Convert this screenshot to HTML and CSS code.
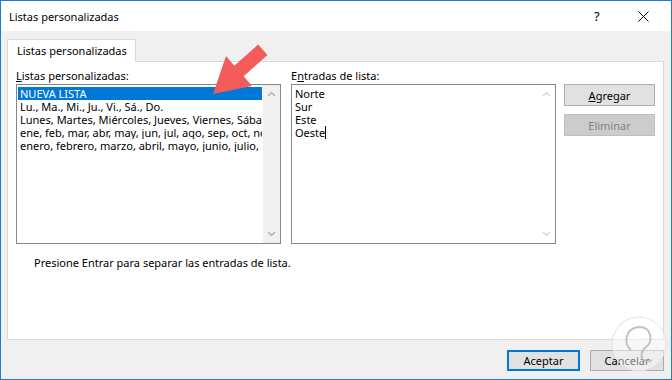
FILE: index.html
```html
<!DOCTYPE html>
<html lang="es">
<head>
    <meta charset="UTF-8">
    <title>Listas personalizadas</title>
    <link rel="stylesheet" href="styles.css">
</head>
<body>

    <div class="dialog">
        <!-- Barra de titulo -->
        <div class="titlebar">
            <span class="title">Listas personalizadas</span>
            <span class="help">?</span>
            <span class="close">
                <svg width="11" height="11" viewBox="0 0 11 11"><path d="M0.5 0.5 L10.5 10.5 M10.5 0.5 L0.5 10.5" stroke="#000" stroke-width="1" fill="none"/></svg>
            </span>
        </div>

        <div class="content">
            <div class="tabs">
                <div class="tab">Listas personalizadas</div>
            </div>

            <div class="panel">
                <div class="columns">
                    <div class="col">
                        <label class="field-label"><u>L</u>istas personalizadas:</label>
                        <div class="listbox">
                            <div class="items">
                                <div class="item selected">NUEVA LISTA</div>
                                <div class="item">Lu., Ma., Mi., Ju., Vi., Sá., Do.</div>
                                <div class="item">Lunes, Martes, Miércoles, Jueves, Viernes, Sábado, Domingo</div>
                                <div class="item">ene, feb, mar, abr, may, jun, jul, ago, sep, oct, nov, dic</div>
                                <div class="item">enero, febrero, marzo, abril, mayo, junio, julio, agosto</div>
                            </div>
                            <div class="scrollbar">
                                <svg width="9" height="6" viewBox="0 0 9 6"><path d="M1 5 L4.5 1.5 L8 5" stroke="#a6a6a6" stroke-width="1.2" fill="none"/></svg>
                                <svg width="9" height="6" viewBox="0 0 9 6"><path d="M1 1 L4.5 4.5 L8 1" stroke="#a6a6a6" stroke-width="1.2" fill="none"/></svg>
                            </div>
                        </div>
                    </div>

                    <div class="col">
                        <label class="field-label">E<u>n</u>tradas de lista:</label>
                        <div class="listbox">
                            <div class="items entries">
                                <div class="item">Norte</div>
                                <div class="item">Sur</div>
                                <div class="item">Este</div>
                                <div class="item">Oeste<span class="caret"></span></div>
                            </div>
                            <div class="scrollbar light">
                                <svg width="9" height="6" viewBox="0 0 9 6"><path d="M1 5 L4.5 1.5 L8 5" stroke="#cfcfcf" stroke-width="1.2" fill="none"/></svg>
                                <svg width="9" height="6" viewBox="0 0 9 6"><path d="M1 1 L4.5 4.5 L8 1" stroke="#cfcfcf" stroke-width="1.2" fill="none"/></svg>
                            </div>
                        </div>
                    </div>

                    <div class="side-buttons">
                        <button class="btn"><u>A</u>gregar</button>
                        <button class="btn disabled">Eliminar</button>
                    </div>
                </div>

                <p class="hint">Presione Entrar para separar las entradas de lista.</p>
            </div>

            <div class="footer">
                <button class="btn default">Aceptar</button>
                <button class="btn">Cancelar</button>
            </div>
        </div>

        <!-- Flecha roja que señala la lista -->
        <svg class="arrow" width="80" height="70" viewBox="200 36 80 70">
            <polygon points="213,94 252,86 243.7,76.2 267.5,54.9 258.1,44.5 234.3,65.8 226,56" fill="#f45b5b"/>
        </svg>

        <!-- Marca de agua -->
        <svg class="watermark" width="60" height="60" viewBox="0 0 60 60">
            <circle cx="30" cy="30" r="27" fill="#ffffff" fill-opacity="0.45" stroke="#dfe3e6" stroke-width="1"/>
            <path d="M22 36 C14 30 16 14 30 13 C43 13 45 28 36 34 C33 36 32 40 33 45 C36 47 40 48 43 46" stroke="#a9b4bb" stroke-width="2" fill="none" stroke-opacity="0.8"/>
        </svg>
    </div>

</body>
</html>
```

FILE: styles.css
```css
body {
    margin: 0;
    padding: 0;
    font-family: 'Noto Sans', 'Open Sans', sans-serif;
    font-size: 11px;
    color: #000;
}

.dialog {
    position: relative;
    width: 672px;
    height: 380px;
    box-sizing: border-box;
    border: 1px solid #1c7fd6;
    background-color: #f0f0f0;
    display: flex;
    flex-direction: column;
    overflow: hidden;
}

/* Barra de titulo */
.titlebar {
    height: 30px;
    background-color: #fff;
    display: flex;
    align-items: center;
    padding-left: 8px;
    flex-shrink: 0;
}

.title {
    flex: 1;
}

.help {
    width: 14px;
    font-size: 13px;
    margin-right: 30px;
}

.close {
    width: 11px;
    height: 11px;
    margin-right: 22px;
    display: flex;
}

/* Pestañas y panel */
.content {
    flex: 1;
    display: flex;
    flex-direction: column;
    padding: 8px 7px 0 6px;
}

.tabs {
    display: flex;
    height: 22px;
    position: relative;
    z-index: 1;
}

.tab {
    width: 129px;
    height: 23px;
    box-sizing: border-box;
    border: 1px solid #d9d9d9;
    border-bottom: none;
    background-color: #fff;
    padding-left: 9px;
    line-height: 21px;
    white-space: nowrap;
}

.panel {
    height: 279px;
    box-sizing: border-box;
    border: 1px solid #d9d9d9;
    background-color: #fff;
    padding: 6px 8px 0 8px;
}

.columns {
    display: flex;
}

.col {
    width: 265px;
    margin-right: 10px;
}

.col:nth-child(2) {
    margin-right: 8px;
}

.field-label {
    display: block;
    height: 15px;
    line-height: 15px;
    margin-bottom: 1px;
    white-space: nowrap;
}

.listbox {
    width: 265px;
    height: 160px;
    box-sizing: border-box;
    border: 1px solid #828790;
    display: flex;
}

.items {
    flex: 1;
    min-width: 0;
    padding: 2px 1px 0 1px;
}

.item {
    height: 13px;
    line-height: 13px;
    padding-left: 2px;
    white-space: nowrap;
    overflow: hidden;
}

.item.selected {
    background-color: #0078d7;
    color: #fff;
}

.entries {
    padding-left: 3px;
}

.entries .item {
    padding-left: 0;
}

.caret {
    display: inline-block;
    width: 1px;
    height: 13px;
    background-color: #000;
    vertical-align: top;
}

.scrollbar {
    width: 17px;
    flex-shrink: 0;
    background-color: #f0f0f0;
    display: flex;
    flex-direction: column;
    justify-content: space-between;
    align-items: center;
    padding: 6px 0 6px 0;
}

.scrollbar.light {
    background-color: #fff;
}

/* Botones */
.side-buttons {
    width: 91px;
    padding-top: 16px;
    display: flex;
    flex-direction: column;
    gap: 8px;
}

.btn {
    font-family: inherit;
    font-size: 11px;
    color: #000;
    background-color: #e1e1e1;
    border: 1px solid #adadad;
    height: 22px;
    padding: 0;
    margin: 0;
}

.side-buttons .btn {
    width: 91px;
}

.btn.disabled {
    background-color: #cccccc;
    border-color: #bfbfbf;
    color: #838383;
}

.hint {
    margin: 12px 0 0 18px;
    line-height: 13px;
}

.footer {
    display: flex;
    justify-content: flex-end;
    gap: 10px;
    margin-top: 10px;
}

.footer .btn {
    width: 74px;
    height: 21px;
}

.btn.default {
    width: 73px;
    border: 2px solid #0078d7;
}

/* Capas superpuestas */
.arrow {
    position: absolute;
    left: 199px;
    top: 35px;
    pointer-events: none;
}

.watermark {
    position: absolute;
    left: 608px;
    top: 313px;
    pointer-events: none;
}
```
